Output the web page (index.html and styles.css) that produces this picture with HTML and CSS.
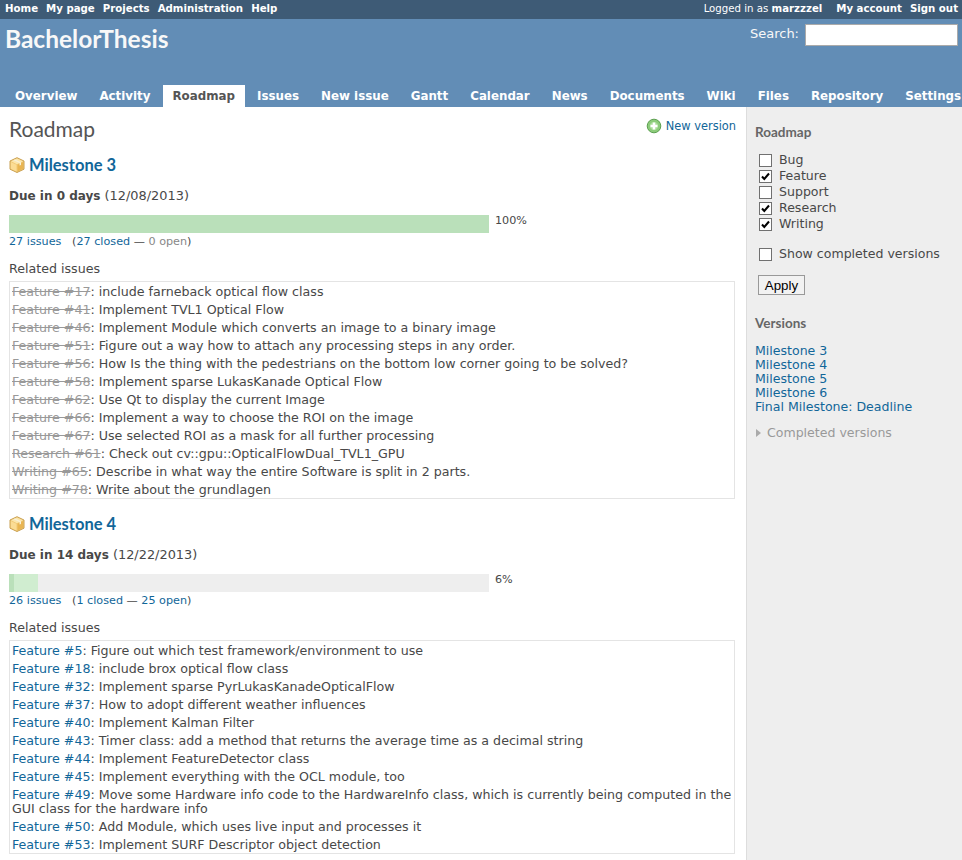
FILE: index.html
```html
<!DOCTYPE html>
<html lang="en">

<head>
    <meta charset="UTF-8">
    <title>Roadmap - BachelorThesis</title>
    <link rel="stylesheet" href="styles.css">
</head>

<body>
    <svg class="defs" width="0" height="0">
        <symbol id="box" viewBox="0 0 16 16">
            <path d="M8 .7 15 4v8.2l-7 3.3-7-3.3V4z" fill="#f0c873" stroke="#c9a052" stroke-linejoin="round"/>
            <path d="M8 1.6 14 4.3 8 7.2 2 4.3z" fill="#fbe6ad"/>
            <path d="M1.8 5 7.5 7.8v6.6L1.8 11.8z" fill="#fbdc94"/>
            <path d="M8.5 7.8 14.2 5v6.8l-5.7 2.6z" fill="#e9b552"/>
            <path d="M4.4 3.2 10.5 6v2.6l1.5-.7V5.2L6 2.4z" fill="#f7f0d8"/>
        </symbol>
    </svg>

    <div id="top-menu">
        <ul>
            <li><a href="#">Home</a></li>
            <li><a href="#">My page</a></li>
            <li><a href="#">Projects</a></li>
            <li><a href="#">Administration</a></li>
            <li><a href="#">Help</a></li>
        </ul>
        <div class="account">
            <span class="loggedas">Logged in as <a href="#">marzzzel</a></span>
            <a href="#">My account</a>
            <a href="#">Sign out</a>
        </div>
    </div>

    <div id="header">
        <div class="header-top">
            <h1>BachelorThesis</h1>
            <label class="search">Search: <input type="text"></label>
        </div>
        <ul id="main-menu">
            <li><a href="#">Overview</a></li>
            <li><a href="#">Activity</a></li>
            <li><a href="#" class="selected">Roadmap</a></li>
            <li><a href="#">Issues</a></li>
            <li><a href="#">New issue</a></li>
            <li><a href="#">Gantt</a></li>
            <li><a href="#">Calendar</a></li>
            <li><a href="#">News</a></li>
            <li><a href="#">Documents</a></li>
            <li><a href="#">Wiki</a></li>
            <li><a href="#">Files</a></li>
            <li><a href="#">Repository</a></li>
            <li><a href="#">Settings</a></li>
        </ul>
    </div>

    <div id="main">
        <div id="content">
            <div class="title-row">
                <h2>Roadmap</h2>
                <a href="#" class="new-version">
                    <svg width="16" height="16" viewBox="0 0 16 16">
                        <circle cx="8" cy="8" r="6.8" fill="#8ccb7a" stroke="#5c9f50"/>
                        <circle cx="8" cy="8" r="4" fill="#a9dc98"/>
                        <path d="M6.7 4.5h2.6v2.2h2.2v2.6H9.3v2.2H6.7V9.3H4.5V6.7h2.2z" fill="#fff"/>
                    </svg>
                    New version
                </a>
            </div>

            <div class="version">
                <h3><svg width="16" height="16"><use href="#box"/></svg><a href="#">Milestone 3</a></h3>
                <p class="due"><strong>Due in 0 days</strong> (12/08/2013)</p>
                <div class="progress-row">
                    <div class="progress"><span class="closed" style="width: 100%"></span></div>
                    <span class="pct">100%</span>
                </div>
                <p class="counts"><a href="#">27 issues</a> &nbsp; (<a href="#">27 closed</a> — <a href="#" class="none">0 open</a>)</p>
                <p class="related">Related issues</p>
                <table class="issues done">
                    <tr><td><a href="#">Feature #17</a>: include farneback optical flow class</td></tr>
                    <tr><td><a href="#">Feature #41</a>: Implement TVL1 Optical Flow</td></tr>
                    <tr><td><a href="#">Feature #46</a>: Implement Module which converts an image to a binary image</td></tr>
                    <tr><td><a href="#">Feature #51</a>: Figure out a way how to attach any processing steps in any order.</td></tr>
                    <tr><td><a href="#">Feature #56</a>: How Is the thing with the pedestrians on the bottom low corner going to be solved?</td></tr>
                    <tr><td><a href="#">Feature #58</a>: Implement sparse LukasKanade Optical Flow</td></tr>
                    <tr><td><a href="#">Feature #62</a>: Use Qt to display the current Image</td></tr>
                    <tr><td><a href="#">Feature #66</a>: Implement a way to choose the ROI on the image</td></tr>
                    <tr><td><a href="#">Feature #67</a>: Use selected ROI as a mask for all further processing</td></tr>
                    <tr><td><a href="#">Research #61</a>: Check out cv::gpu::OpticalFlowDual_TVL1_GPU</td></tr>
                    <tr><td><a href="#">Writing #65</a>: Describe in what way the entire Software is split in 2 parts.</td></tr>
                    <tr><td><a href="#">Writing #78</a>: Write about the grundlagen</td></tr>
                </table>
            </div>

            <div class="version">
                <h3><svg width="16" height="16"><use href="#box"/></svg><a href="#">Milestone 4</a></h3>
                <p class="due"><strong>Due in 14 days</strong> (12/22/2013)</p>
                <div class="progress-row">
                    <div class="progress">
                        <span class="closed" style="width: 1%"></span>
                        <span class="started" style="width: 5%"></span>
                    </div>
                    <span class="pct">6%</span>
                </div>
                <p class="counts"><a href="#">26 issues</a> &nbsp; (<a href="#">1 closed</a> — <a href="#">25 open</a>)</p>
                <p class="related">Related issues</p>
                <table class="issues">
                    <tr><td><a href="#">Feature #5</a>: Figure out which test framework/environment to use</td></tr>
                    <tr><td><a href="#">Feature #18</a>: include brox optical flow class</td></tr>
                    <tr><td><a href="#">Feature #32</a>: Implement sparse PyrLukasKanadeOpticalFlow</td></tr>
                    <tr><td><a href="#">Feature #37</a>: How to adopt different weather influences</td></tr>
                    <tr><td><a href="#">Feature #40</a>: Implement Kalman Filter</td></tr>
                    <tr><td><a href="#">Feature #43</a>: Timer class: add a method that returns the average time as a decimal string</td></tr>
                    <tr><td><a href="#">Feature #44</a>: Implement FeatureDetector class</td></tr>
                    <tr><td><a href="#">Feature #45</a>: Implement everything with the OCL module, too</td></tr>
                    <tr><td><a href="#">Feature #49</a>: Move some Hardware info code to the HardwareInfo class, which is currently being computed in the GUI class for the hardware info</td></tr>
                    <tr><td><a href="#">Feature #50</a>: Add Module, which uses live input and processes it</td></tr>
                    <tr><td><a href="#">Feature #53</a>: Implement SURF Descriptor object detection</td></tr>
                </table>
            </div>
        </div>

        <div id="sidebar">
            <h3>Roadmap</h3>
            <ul class="filters">
                <li><label><input type="checkbox"> Bug</label></li>
                <li><label><input type="checkbox" checked> Feature</label></li>
                <li><label><input type="checkbox"> Support</label></li>
                <li><label><input type="checkbox" checked> Research</label></li>
                <li><label><input type="checkbox" checked> Writing</label></li>
            </ul>
            <p class="completed-check"><label><input type="checkbox"> Show completed versions</label></p>
            <button class="apply" type="button">Apply</button>
            <h3 class="versions-title">Versions</h3>
            <ul class="version-links">
                <li><a href="#">Milestone 3</a></li>
                <li><a href="#">Milestone 4</a></li>
                <li><a href="#">Milestone 5</a></li>
                <li><a href="#">Milestone 6</a></li>
                <li><a href="#">Final Milestone: Deadline</a></li>
            </ul>
            <p class="completed-toggle">Completed versions</p>
        </div>
    </div>
</body>

</html>
```

FILE: styles.css
```css
html,
body {
    margin: 0;
    padding: 0;
    height: 100%;
    overflow: hidden;
}

body {
    font-family: "DejaVu Sans", Verdana, sans-serif;
    font-size: 12px;
    color: #484848;
    background-color: #fff;
}

a {
    color: #169;
    text-decoration: none;
}

ul {
    list-style: none;
    margin: 0;
    padding: 0;
}

.defs {
    position: absolute;
}

#top-menu {
    display: flex;
    justify-content: space-between;
    height: 19px;
    padding: 0 4px 0 5px;
    background-color: #3e5b76;
    color: #fff;
    font-size: 10.2px;
    line-height: 17px;
}

#top-menu ul {
    display: flex;
    gap: 8px;
}

#top-menu a {
    color: #fff;
    font-weight: bold;
}

#top-menu .account {
    display: flex;
    gap: 8px;
}

#top-menu .loggedas {
    margin-right: 6px;
}

#header {
    display: flex;
    flex-direction: column;
    justify-content: space-between;
    height: 88px;
    background-color: #628db6;
    color: #f8f8f8;
}

.header-top {
    display: flex;
    justify-content: space-between;
    padding: 5px 4px 0 5px;
}

#header h1 {
    margin: 1px 0 0;
    font-family: Lato, sans-serif;
    font-size: 24.5px;
    font-weight: 700;
    line-height: 28px;
}

.search {
    display: flex;
    align-items: flex-start;
    gap: 6px;
    height: 22px;
    font-size: 13px;
    line-height: 20px;
}

.search input {
    box-sizing: border-box;
    width: 153px;
    height: 22px;
    margin: 0;
    border: 1px solid #aaa;
    background-color: #fff;
}

#main-menu {
    display: flex;
    gap: 2px;
    margin-left: 5px;
    white-space: nowrap;
}

#main-menu a {
    display: block;
    padding: 1px 10px 0;
    color: #fff;
    font-size: 11.85px;
    font-weight: bold;
    line-height: 21px;
}

#main-menu a.selected {
    background-color: #fff;
    color: #555;
}

#main {
    display: flex;
    height: 753px;
}

#content {
    flex: 1;
    min-width: 0;
    padding: 10px 11px 0 9px;
    overflow: hidden;
}

.title-row {
    display: flex;
    justify-content: space-between;
}

#content h2 {
    margin: 0;
    font-family: Lato, sans-serif;
    font-size: 21px;
    font-weight: 400;
    line-height: 24px;
    color: #555;
}

.new-version {
    display: flex;
    align-items: center;
    gap: 4px;
    height: 16px;
    margin: 1px -1px 0 0;
    font-size: 11.4px;
}

.version h3 {
    display: flex;
    align-items: center;
    gap: 4px;
    margin: 14.2px 0 0;
    font-family: Lato, sans-serif;
    font-size: 16.5px;
    font-weight: 700;
    line-height: 20px;
}

.due {
    margin: 12px 0 0;
    font-size: 12.9px;
    line-height: 18px;
}

.due strong {
    font-size: 12px;
}

.progress-row {
    display: flex;
    align-items: flex-start;
    gap: 6px;
    margin-top: 10px;
}

.progress {
    display: flex;
    width: 480px;
    height: 18px;
    background-color: #eee;
}

.progress .closed {
    background-color: #bae0ba;
}

.progress .started {
    background-color: #d0edd0;
}

.pct {
    font-size: 11.2px;
    line-height: 12px;
}

.counts {
    margin: 2px 0 0;
    font-size: 11.2px;
    line-height: 14px;
    color: #484848;
}

.counts .none {
    color: #888;
}

.related {
    margin: 12.2px 0 0;
    font-size: 12.65px;
    line-height: 16px;
}

.issues {
    width: 100%;
    margin-top: 4px;
    border: 1px solid #e4e4e4;
    border-collapse: collapse;
    font-size: 12.65px;
    line-height: 14px;
}

.issues td {
    padding: 3px 2px 1px;
}

.done a {
    color: #999;
    text-decoration: line-through;
}

#sidebar {
    box-sizing: border-box;
    width: 216px;
    padding: 0 8px;
    border-left: 1px solid #ddd;
    background-color: #eee;
}

#sidebar h3 {
    margin: 17px 0 0;
    font-family: Lato, sans-serif;
    font-size: 13.5px;
    font-weight: 700;
    line-height: 16px;
    color: #666;
}

#sidebar .versions-title {
    margin-top: 20px;
}

.filters {
    margin: 12px 0 0 4px;
}

.filters li {
    height: 16px;
}

#sidebar label {
    display: flex;
    align-items: center;
    gap: 7px;
    font-size: 12.55px;
    line-height: 16px;
}

#sidebar input[type="checkbox"] {
    appearance: none;
    box-sizing: border-box;
    width: 13px;
    height: 13px;
    margin: 0;
    border: 1px solid #707070;
    background: #fff center no-repeat;
}

#sidebar input[type="checkbox"]:checked {
    background-image: url("data:image/svg+xml,%3Csvg xmlns='http://www.w3.org/2000/svg' width='11' height='11'%3E%3Cpath d='M2 5.5 4.3 8 9 2.5' fill='none' stroke='%23000' stroke-width='2'/%3E%3C/svg%3E");
}

.completed-check {
    margin: 14px 0 0 4px;
}

.apply {
    display: block;
    box-sizing: border-box;
    width: 47px;
    height: 20px;
    margin: 13px 0 0 3px;
    padding: 0;
    border: 1px solid #999;
    background-color: #f2f2f2;
    color: #000;
    font-family: "Liberation Sans", Arial, sans-serif;
    font-size: 13.3px;
}

.version-links {
    margin-top: 13px;
    font-size: 12.55px;
    line-height: 14px;
}

.completed-toggle {
    position: relative;
    margin: 11px 0 0 12px;
    font-size: 12.55px;
    line-height: 16px;
    color: #999;
}

.completed-toggle::before {
    content: "";
    position: absolute;
    left: -11px;
    top: 4px;
    border: 4px solid transparent;
    border-left: 5px solid #aaa;
    border-right: 0;
}
```
